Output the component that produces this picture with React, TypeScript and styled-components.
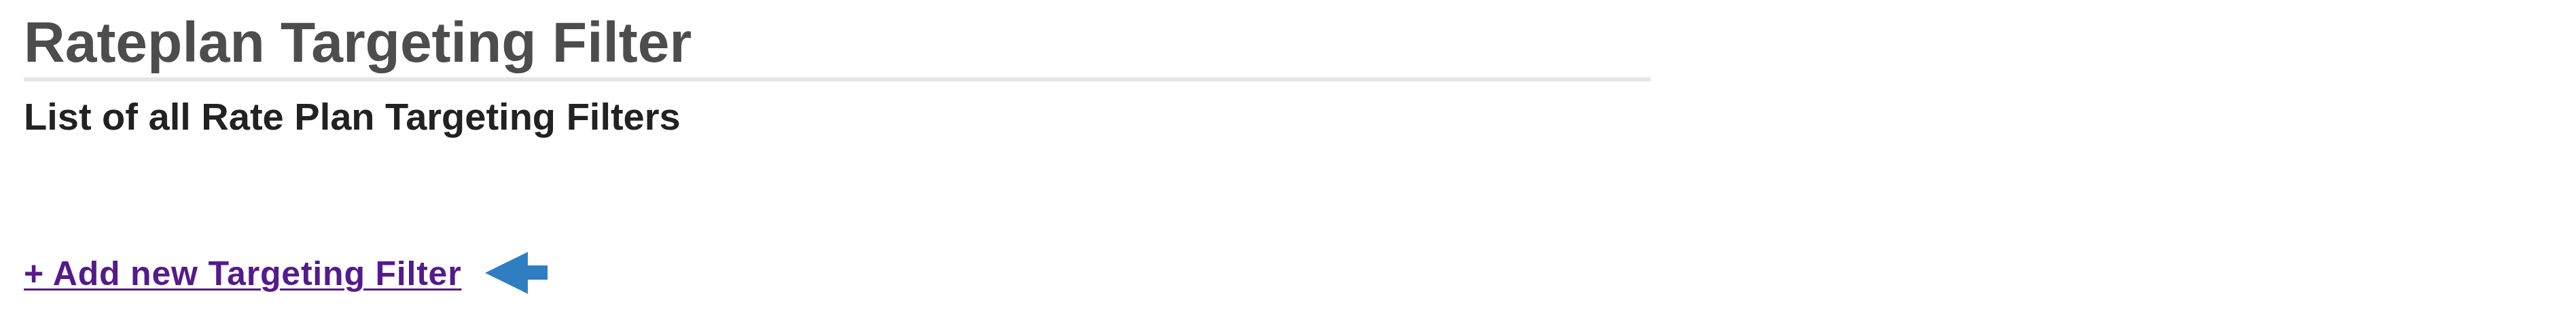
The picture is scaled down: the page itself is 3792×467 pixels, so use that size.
import styled, { createGlobalStyle } from 'styled-components';

const GlobalStyle = createGlobalStyle`
  body {
    margin: 0;
    background: #ffffff;
    font-family: "Liberation Sans", Arial, sans-serif;
  }
`;

const Page = styled.div`
  padding: 14px 0 0 35px;
  width: 2395px;
`;

const Title = styled.h1`
  margin: 0;
  padding-bottom: 4px;
  border-bottom: 6px solid #e6e6e6;
  font-size: 84px;
  line-height: 96px;
  font-weight: bold;
  color: #4d4d4d;
`;

const Subtitle = styled.h3`
  margin: 20px 0 0;
  font-size: 56px;
  line-height: 64px;
  font-weight: bold;
  color: #222222;
`;

const ActionRow = styled.div`
  display: flex;
  align-items: flex-start;
  gap: 35px;
  margin-top: 166px;
`;

const AddLink = styled.a`
  margin-top: 5px;
  font-size: 50px;
  line-height: 57px;
  font-weight: bold;
  letter-spacing: 0.8px;
  color: #551a8b;
  text-decoration: underline;
  text-decoration-thickness: 3px;
  text-underline-offset: 5px;
  cursor: pointer;
`;

const Arrow = styled.svg`
  display: block;
  margin-top: 1px;
`;

const PointerArrow = () => (
  <Arrow width="92" height="62" viewBox="0 0 92 62">
    <path d="M0 31 L63 0 L63 20 L92 20 L92 41 L63 41 L63 62 Z" fill="#2f7ec2" />
  </Arrow>
);

export default function App() {
  return (
    <>
      <GlobalStyle />
      <Page>
        <Title>Rateplan Targeting Filter</Title>
        <Subtitle>List of all Rate Plan Targeting Filters</Subtitle>
        <ActionRow>
          <AddLink href="#">+ Add new Targeting Filter</AddLink>
          <PointerArrow />
        </ActionRow>
      </Page>
    </>
  );
}
